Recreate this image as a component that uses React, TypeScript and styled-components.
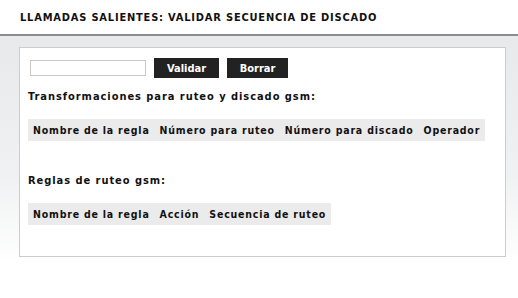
import React from 'react';
import styled, { createGlobalStyle } from 'styled-components';

const GlobalStyle = createGlobalStyle`
  body {
    margin: 0;
    background: #fff;
    font-family: "DejaVu Sans Condensed", "DejaVu Sans", Verdana, sans-serif;
    color: #111;
  }
`;

const Page = styled.div`
  width: 518px;
  height: 298px;
`;

const Header = styled.div`
  height: 36px;
  box-sizing: border-box;
  padding: 11px 0 0 20px;
  border-bottom: 2px solid #8c8c8c;
  font-size: 11px;
  font-weight: bold;
  letter-spacing: 0.8px;
  text-transform: uppercase;
`;

const Main = styled.div`
  padding: 11px 12px 0 19px;
  background: linear-gradient(to bottom, #e8e9ea 0%, #f0f1f2 60%, #ffffff 100%);
  background-size: 100% 230px;
  background-repeat: no-repeat;
`;

const Card = styled.div`
  box-sizing: border-box;
  width: 487px;
  height: 210px;
  background: #fff;
  border: 1px solid #cccccc;
  padding: 10px 8px 0 8px;
`;

const FormRow = styled.div`
  display: flex;
  align-items: center;
  gap: 8px;
  padding-left: 2px;
`;

const TextInput = styled.input`
  box-sizing: border-box;
  width: 116px;
  height: 16px;
  margin: 0;
  border: 1px solid #c8c8c8;
  padding: 0 2px;
`;

const Button = styled.button<{ $width: number }>`
  width: ${(p) => p.$width}px;
  height: 20px;
  margin: 0;
  padding: 0;
  border: none;
  background: #222222;
  color: #fff;
  font-family: "DejaVu Sans Condensed", "DejaVu Sans", Verdana, sans-serif;
  font-size: 11px;
  font-weight: bold;
`;

const SectionTitle = styled.div<{ $top: number }>`
  margin-top: ${(p) => p.$top}px;
  font-size: 11px;
  font-weight: bold;
  letter-spacing: 0.95px;
`;

const Table = styled.table`
  margin-top: 16px;
  border-collapse: collapse;
  background: #ebebeb;
`;

const Th = styled.th`
  height: 22px;
  padding: 0 5px;
  font-size: 10.5px;
  font-weight: bold;
  letter-spacing: 0.8px;
  text-align: left;
  white-space: nowrap;
`;

const App: React.FC = () => {
  return (
    <Page>
      <GlobalStyle />
      <Header>Llamadas salientes: Validar secuencia de discado</Header>
      <Main>
        <Card>
          <FormRow>
            <TextInput type="text" />
            <Button $width={65}>Validar</Button>
            <Button $width={61}>Borrar</Button>
          </FormRow>
          <SectionTitle $top={12}>Transformaciones para ruteo y discado gsm:</SectionTitle>
          <Table>
            <thead>
              <tr>
                <Th>Nombre de la regla</Th>
                <Th>Número para ruteo</Th>
                <Th>Número para discado</Th>
                <Th>Operador</Th>
              </tr>
            </thead>
          </Table>
          <SectionTitle $top={33}>Reglas de ruteo gsm:</SectionTitle>
          <Table>
            <thead>
              <tr>
                <Th>Nombre de la regla</Th>
                <Th>Acción</Th>
                <Th>Secuencia de ruteo</Th>
              </tr>
            </thead>
          </Table>
        </Card>
      </Main>
    </Page>
  );
};

export default App;
